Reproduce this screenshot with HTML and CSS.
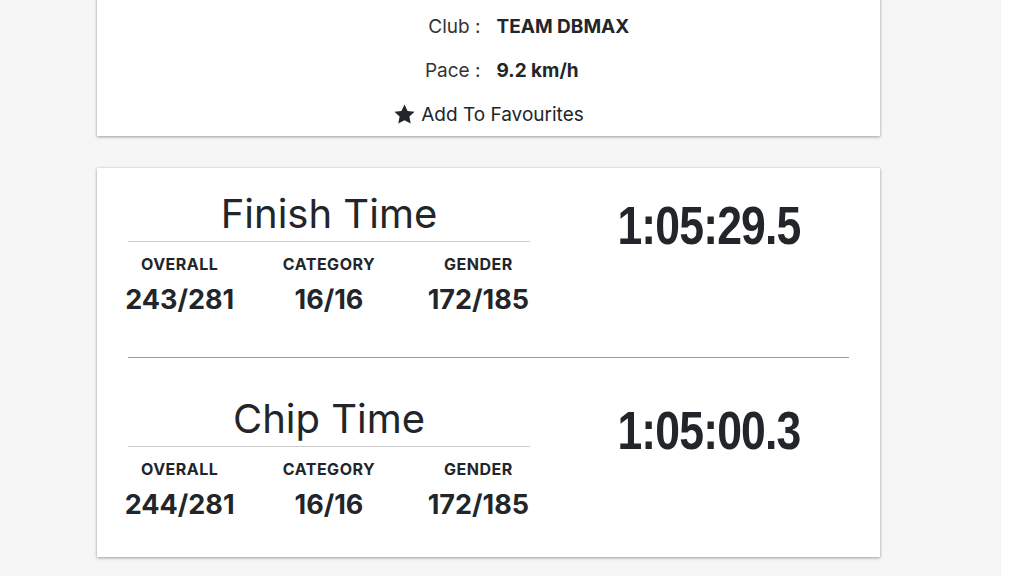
FILE: index.html
```html
<!DOCTYPE html>
<html lang="en">

<head>
    <meta charset="UTF-8">
    <meta name="viewport" content="width=device-width, initial-scale=1.0">
    <title>Race Result</title>
    <link rel="stylesheet" href="styles.css">
</head>

<body>
    <div class="page">
        <!-- Runner details -->
        <div class="card details">
            <div class="detail-row">
                <span class="detail-label">Club :</span>
                <span class="detail-value">TEAM DBMAX</span>
            </div>
            <div class="detail-row">
                <span class="detail-label">Pace :</span>
                <span class="detail-value">9.2 km/h</span>
            </div>
            <div class="favourite">
                <svg class="star" viewBox="0 0 24 24" width="23" height="23">
                    <path d="M12 1.5l3.2 6.8 7.3.9-5.4 5 1.4 7.3L12 17.9l-6.5 3.6 1.4-7.3-5.4-5 7.3-.9z"
                        fill="#222529" />
                </svg>
                <span>Add To Favourites</span>
            </div>
        </div>

        <!-- Times -->
        <div class="card times">
            <div class="result">
                <div class="result-left">
                    <h2>Finish Time</h2>
                    <div class="ranks">
                        <div class="rank">
                            <div class="rank-label">OVERALL</div>
                            <div class="rank-value">243/281</div>
                        </div>
                        <div class="rank">
                            <div class="rank-label">CATEGORY</div>
                            <div class="rank-value">16/16</div>
                        </div>
                        <div class="rank">
                            <div class="rank-label">GENDER</div>
                            <div class="rank-value">172/185</div>
                        </div>
                    </div>
                </div>
                <div class="result-time"><span>1:05:29.5</span></div>
            </div>

            <hr class="divider">

            <div class="result">
                <div class="result-left">
                    <h2>Chip Time</h2>
                    <div class="ranks">
                        <div class="rank">
                            <div class="rank-label">OVERALL</div>
                            <div class="rank-value">244/281</div>
                        </div>
                        <div class="rank">
                            <div class="rank-label">CATEGORY</div>
                            <div class="rank-value">16/16</div>
                        </div>
                        <div class="rank">
                            <div class="rank-label">GENDER</div>
                            <div class="rank-value">172/185</div>
                        </div>
                    </div>
                </div>
                <div class="result-time"><span>1:05:00.3</span></div>
            </div>
        </div>
    </div>
</body>

</html>
```

FILE: styles.css
```css
html {
    background: #fff;
}

body {
    font-family: 'Inter', 'Noto Sans', sans-serif;
    margin: 0;
    padding: 0;
    color: #222529;
}

.page {
    width: 1001px;
    min-height: 576px;
    background: #f6f6f6;
    overflow: hidden;
}

.card {
    box-sizing: border-box;
    background: #fff;
    width: 783px;
    margin-left: 97px;
    box-shadow: 0 1px 3px rgba(0, 0, 0, 0.35), 0 0 2px rgba(0, 0, 0, 0.08);
}

/* Runner details */

.details {
    margin-top: -40px;
    padding-top: 44px;
    margin-bottom: 32px;
}

.detail-row {
    display: grid;
    grid-template-columns: 1fr 1fr;
    column-gap: 16px;
    height: 44px;
    align-items: center;
    font-size: 19px;
}

.detail-label {
    text-align: right;
    color: #333;
}

.detail-value {
    font-weight: 700;
}

.favourite {
    display: flex;
    justify-content: center;
    align-items: center;
    gap: 5px;
    height: 44px;
    font-size: 19px;
    color: #222529;
}

/* Times */

.times {
    padding: 0 31px;
}

.result {
    display: grid;
    grid-template-columns: 402px 1fr;
    column-gap: 38px;
    padding: 37px 0 40px;
}

.result:first-child {
    padding-top: 22px;
}

.result:last-child {
    padding-bottom: 35px;
}

.result-left h2 {
    margin: 0;
    font-size: 40px;
    font-weight: 400;
    line-height: 48px;
    text-align: center;
    padding-bottom: 3px;
    border-bottom: 1px solid #cfcfcf;
}

.ranks {
    display: grid;
    grid-template-columns: repeat(3, 1fr);
    margin: 12px -23px 0;
    text-align: center;
}

.rank-label {
    font-size: 16px;
    font-weight: 700;
    letter-spacing: 0.5px;
    line-height: 20px;
}

.rank-value {
    margin-top: 9px;
    font-size: 27px;
    font-weight: 700;
    line-height: 34px;
}

.result-time {
    padding-top: 6px;
    text-align: center;
}

.result-time span {
    display: inline-block;
    font-family: 'Liberation Sans', 'Arial', sans-serif;
    font-size: 53px;
    font-weight: 700;
    letter-spacing: -1px;
    line-height: 60px;
    transform: scaleX(0.84);
}

.divider {
    margin: 0;
    border: none;
    border-top: 1px solid #9a9a9a;
}
```
